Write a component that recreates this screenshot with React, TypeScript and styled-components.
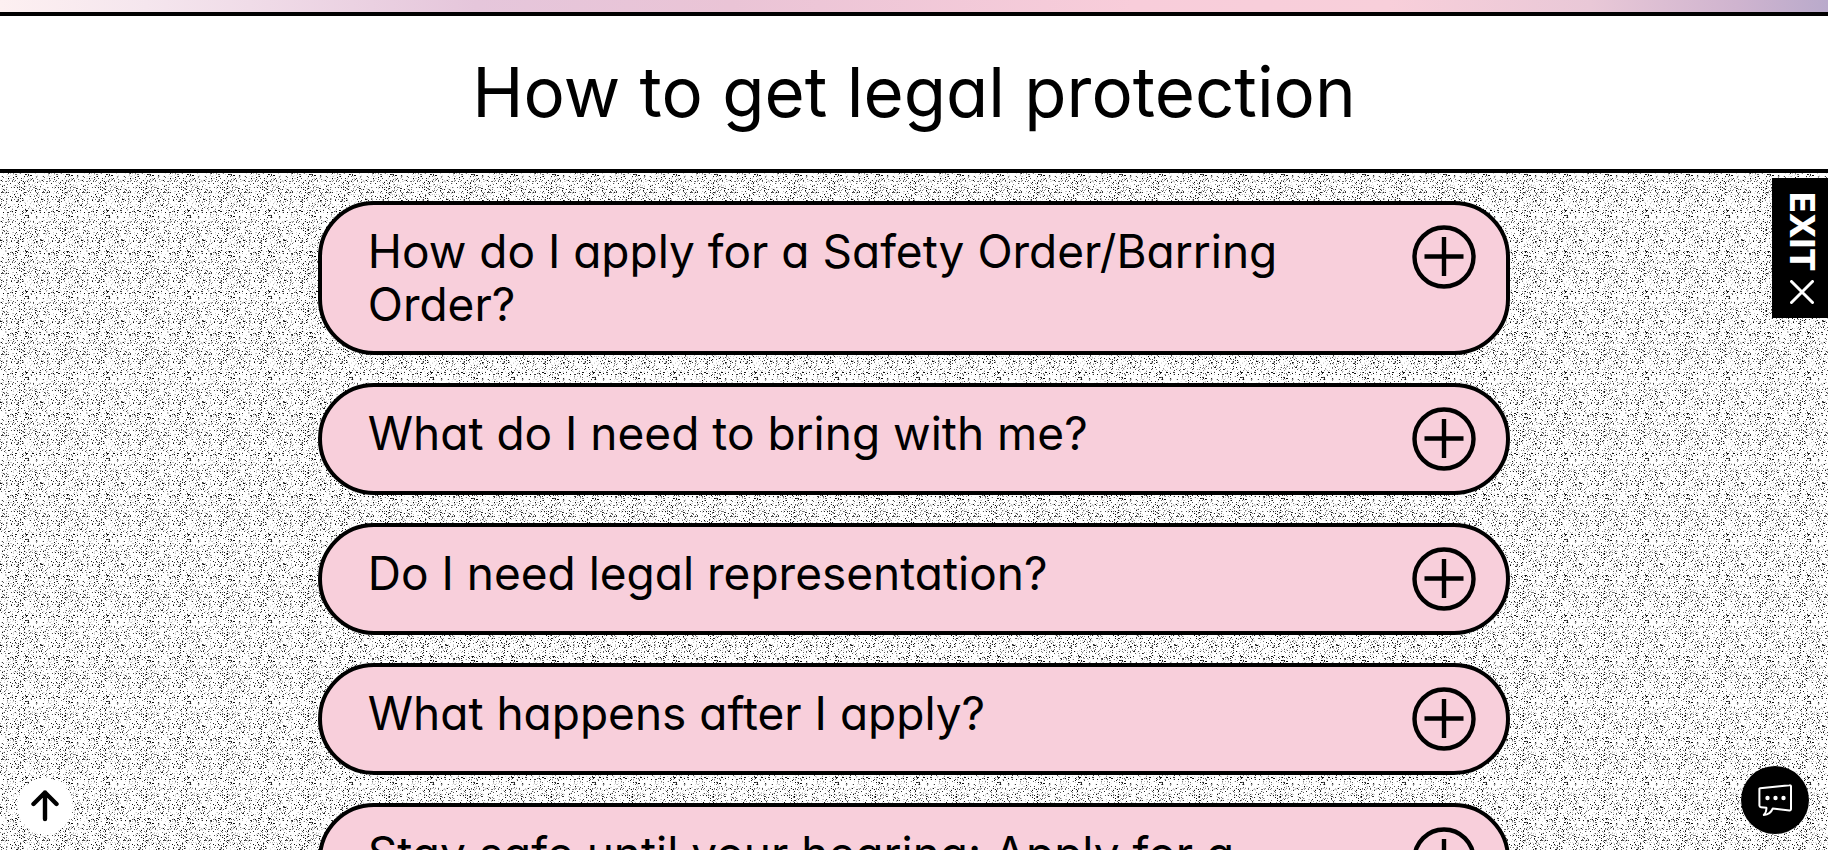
import React, { useState } from 'react';
import styled, { createGlobalStyle } from 'styled-components';

const INK = '#000000';
const PINK = '#f8cfdb';
const SANS = "Inter, 'Liberation Sans', sans-serif";

const TILE = 81;

/* Speckle tile: a half-size cell of random grey dots, repeated with a few dots dropped. */
function speckleTile(): string {
  const cellSize = 41;
  let state = 20731;
  const random = () => {
    state = (state + 0x6d2b79f5) | 0;
    let t = Math.imul(state ^ (state >>> 15), 1 | state);
    t = (t + Math.imul(t ^ (t >>> 7), 61 | t)) ^ t;
    return ((t ^ (t >>> 14)) >>> 0) / 4294967296;
  };
  const cell: number[] = [];
  for (let i = 0; i < cellSize * cellSize; i += 1) {
    const r = random();
    cell.push(r < 0.15 ? Math.floor(random() * 150) : r < 0.29 ? 185 + Math.floor(random() * 65) : 255);
  }
  let dots = '';
  for (let y = 0; y < TILE; y += 1) {
    for (let x = 0; x < TILE; x += 1) {
      const g = cell[(y % cellSize) * cellSize + (x % cellSize)];
      if (g < 255 && random() > 0.15) {
        dots += `<rect x="${x}" y="${y}" width="1" height="1" fill="rgb(${g},${g},${g})"/>`;
      }
    }
  }
  const svg = `<svg xmlns="http://www.w3.org/2000/svg" width="${TILE}" height="${TILE}" shape-rendering="crispEdges">${dots}</svg>`;
  return `url("data:image/svg+xml,${encodeURIComponent(svg)}")`;
}

const SPECKLES = speckleTile();

const GlobalStyle = createGlobalStyle`
  *, *::before, *::after { box-sizing: border-box; }
  html { scrollbar-width: none; }
  body {
    margin: 0;
    color: ${INK};
    background: #fff;
    font-family: ${SANS};
    font-feature-settings: 'cv11' 1;
  }
`;

const Page = styled.div`
  min-height: 100vh;
  display: flex;
  flex-direction: column;
`;

const GradientStrip = styled.div`
  height: 12px;
  background: linear-gradient(90deg, #fdf0f1 0%, #f5e6ee 8%, #e5c6db 26%, #eac4d6 40%, #f8cdda 62%, #f8cfda 76%, #e9c8d7 87%, #cfb4cf 95%, #b9aacb 100%);
`;

const TitleBand = styled.header`
  padding: 38px 24px 39px;
  border-top: 4px solid ${INK};
  border-bottom: 4px solid ${INK};
  background: #fff;
  text-align: center;
`;

const Title = styled.h1`
  margin: 0;
  font-size: 69px;
  line-height: 76px;
  font-weight: 400;
`;

const SpeckledSection = styled.main`
  flex: 1;
  padding: 28px 24px;
  background: #fff ${SPECKLES} 0 0 / ${TILE}px ${TILE}px;
`;

const QuestionList = styled.ul`
  width: 67%;
  margin: 0 auto;
  padding: 0;
  list-style: none;
  display: flex;
  flex-direction: column;
  gap: 28px;
`;

const QuestionCard = styled.button`
  width: 100%;
  padding: 20px 30px 20px 46px;
  display: flex;
  align-items: flex-start;
  justify-content: space-between;
  gap: 112px;
  border: 4px solid ${INK};
  border-radius: 56px;
  background: ${PINK};
  color: ${INK};
  font: inherit;
  font-size: 46px;
  line-height: 53px;
  text-align: left;
  cursor: pointer;
`;

const QuestionText = styled.span`
  flex: 1;
`;

const PlusIcon = styled.svg`
  flex: none;
  width: 64px;
  height: 64px;
`;

const ExitButton = styled.button`
  position: fixed;
  top: 178px;
  right: 0;
  width: 56px;
  height: 140px;
  padding: 14px 0 14px 4px;
  display: flex;
  flex-direction: column;
  align-items: center;
  justify-content: space-between;
  border: 0;
  background: ${INK};
  color: #fff;
  font: 800 34px/40px ${SANS};
  cursor: pointer;
`;

const ExitLabel = styled.span`
  writing-mode: vertical-rl;
`;

const RoundButton = styled.button<{ $side: 'left' | 'right'; $inset: number; $size: number; $dark?: boolean }>`
  position: fixed;
  bottom: 16px;
  ${({ $side }) => $side}: ${({ $inset }) => $inset}px;
  width: ${({ $size }) => $size}px;
  height: ${({ $size }) => $size}px;
  padding: 0;
  display: grid;
  place-items: center;
  border: 0;
  border-radius: 50%;
  background: ${({ $dark }) => ($dark ? INK : '#fff')};
  color: ${({ $dark }) => ($dark ? '#fff' : INK)};
  cursor: pointer;
`;

const QUESTIONS = [
  'How do I apply for a Safety Order/Barring Order?',
  'What do I need to bring with me?',
  'Do I need legal representation?',
  'What happens after I apply?',
  'Stay safe until your hearing: Apply for a Protection Order',
];

function Question({ text }: { text: string }) {
  const [open, setOpen] = useState(false);
  return (
    <li>
      <QuestionCard type="button" aria-expanded={open} onClick={() => setOpen(!open)}>
        <QuestionText>{text}</QuestionText>
        <PlusIcon viewBox="0 0 64 64" fill="none" stroke="currentColor" strokeWidth="4.4" aria-hidden="true">
          <circle cx="32" cy="32" r="29.5" />
          <path d={open ? 'M12.5 31.5h39' : 'M12.5 31.5h39M32 12v39'} />
        </PlusIcon>
      </QuestionCard>
    </li>
  );
}

export default function App() {
  return (
    <Page>
      <GlobalStyle />
      <GradientStrip />
      <TitleBand>
        <Title>How to get legal protection</Title>
      </TitleBand>
      <SpeckledSection>
        <QuestionList>
          {QUESTIONS.map((q) => (
            <Question key={q} text={q} />
          ))}
        </QuestionList>
      </SpeckledSection>
      <ExitButton type="button">
        <ExitLabel>EXIT</ExitLabel>
        <svg width="24" height="24" viewBox="0 0 24 24" stroke="currentColor" strokeWidth="3" strokeLinecap="round" aria-hidden="true">
          <path d="M1.5 1.5l21 21M22.5 1.5l-21 21" />
        </svg>
      </ExitButton>
      <RoundButton type="button" $side="left" $inset={17} $size={56} aria-label="Back to top">
        <svg width="28" height="32" viewBox="0 0 28 32" fill="none" stroke="currentColor" strokeWidth="4.4" strokeLinecap="round" strokeLinejoin="round" aria-hidden="true">
          <path d="M14 29V2.5M2.5 14L14 2.5L25.5 14" />
        </svg>
      </RoundButton>
      <RoundButton type="button" $side="right" $inset={19} $size={68} $dark aria-label="Open chat">
        <svg width="34" height="32" viewBox="0 0 34 32" fill="none" stroke="currentColor" strokeWidth="2" strokeLinejoin="round" aria-hidden="true">
          <path d="M2.2 4.2L31.5 1.2Q33 1 33 2.5V25Q33 26.5 31.5 26.4L14.8 24.4Q12.5 30.5 5.8 31Q8.8 28 8.4 23.8L3 23.2Q1.4 23 1.4 21.5V5.5Q1.2 4.3 2.2 4.2Z" />
          <g fill="currentColor" stroke="none">
            <circle cx="9.5" cy="14" r="2.2" />
            <circle cx="17.5" cy="14" r="2.2" />
            <circle cx="25.5" cy="14" r="2.2" />
          </g>
        </svg>
      </RoundButton>
    </Page>
  );
}
